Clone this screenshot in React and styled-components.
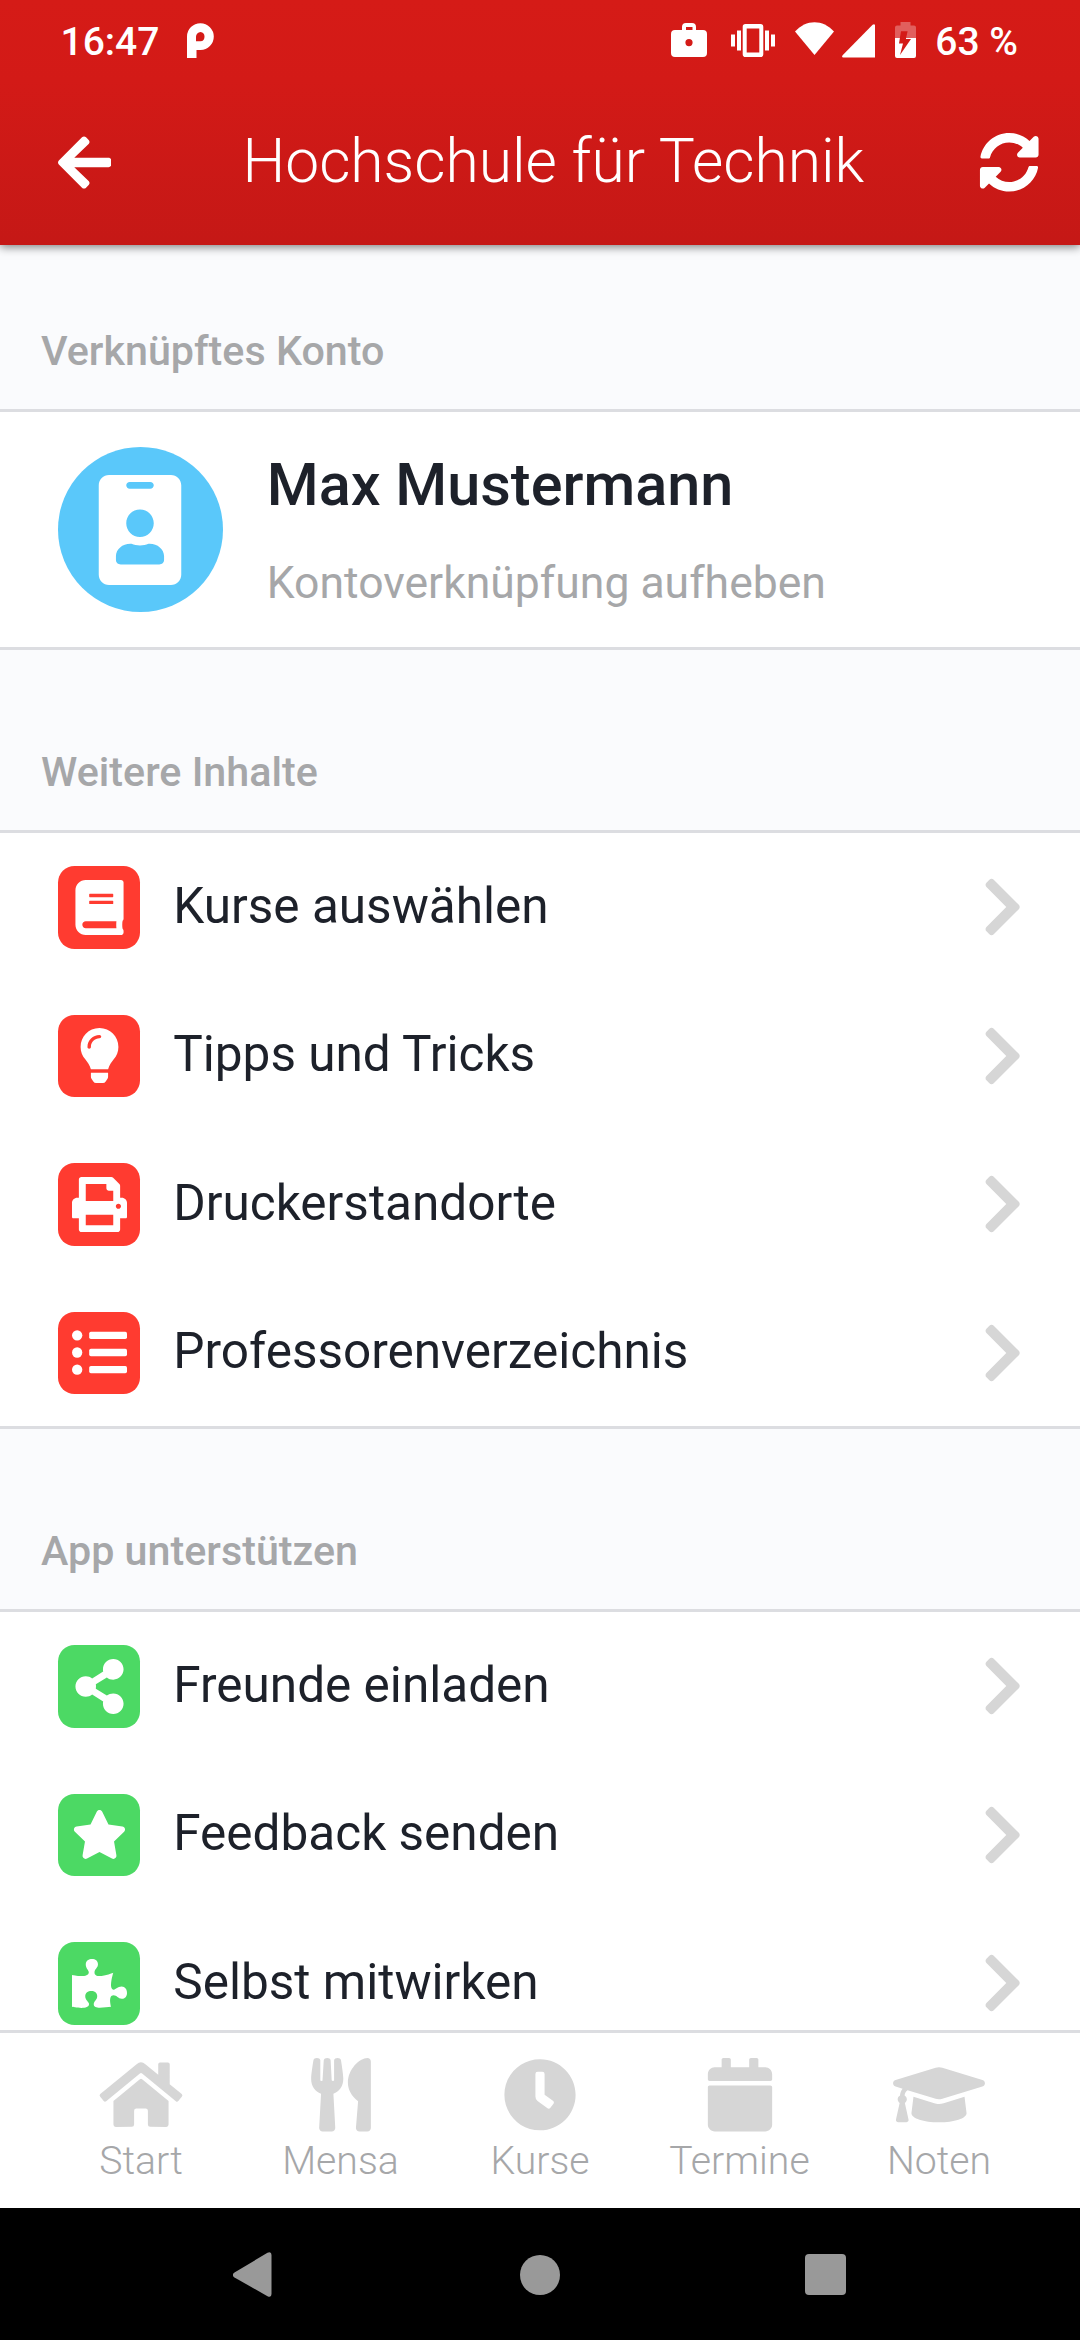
import React from 'react';
import styled, { createGlobalStyle, css } from 'styled-components';
import {
  FaArrowLeft,
  FaSyncAlt,
  FaIdBadge,
  FaBook,
  FaLightbulb,
  FaShareAlt,
  FaStar,
  FaPuzzlePiece,
  FaChevronRight,
  FaHome,
  FaUtensils,
  FaClock,
  FaCalendar,
  FaGraduationCap,
} from 'react-icons/fa';

const colors = {
  line: '#dcdde1',
  page: '#fafbfd',
  ink: '#1d212a',
  muted: '#a6a7a9',
  faint: '#d6d6d6',
  red: '#ff3b30',
  green: '#4cd964',
  blue: '#5ac8fa',
};

const GlobalStyle = createGlobalStyle`
  *, *::before, *::after { box-sizing: border-box; }
  body {
    margin: 0;
    font-family: Roboto, "Liberation Sans", sans-serif;
    background: ${colors.page};
  }
  svg { display: block; flex: none; }
`;

const Screen = styled.div`
  width: 1080px;
  height: 2340px;
  display: flex;
  flex-direction: column;
  overflow: hidden;
  background: ${colors.page};
`;

const Header = styled.header`
  flex: none;
  height: 245px;
  display: flex;
  flex-direction: column;
  color: #fff;
  background: linear-gradient(#d51b17 0, #d31a17 80px, #c51816 245px);
  box-shadow: 0 2px 9px rgba(0, 0, 0, 0.5);
  z-index: 1;
`;

const StatusBar = styled.div`
  height: 82px;
  padding: 0 62px 0 60.5px;
  display: flex;
  align-items: center;
  justify-content: space-between;
`;

const StatusGroup = styled.div`
  display: flex;
  align-items: center;
`;

const StatusText = styled.span`
  padding-top: 2px;
  font-size: 39px;
  line-height: 46px;
  font-weight: 500;
  white-space: pre;
`;

const TitleBar = styled.div`
  flex: 1;
  padding: 0 40px 3px 57.75px;
  display: flex;
  align-items: center;
  justify-content: space-between;
`;

const BackArrow = styled(FaArrowLeft)`
  width: 53.4px;
  height: 61px;
`;

const Title = styled.h1`
  margin: 0 0 0 16px;
  font-size: 60.5px;
  line-height: 72px;
  font-weight: 300;
`;

const Content = styled.main`
  flex: 1;
  min-height: 0;
  overflow: hidden;
`;

const SectionTitle = styled.h2`
  margin: 0;
  height: ${(p) => p.$height}px;
  padding: 0 41px 34px;
  display: flex;
  align-items: flex-end;
  font-size: 41.25px;
  line-height: 48px;
  font-weight: 500;
  color: ${colors.muted};
`;

const Group = styled.section`
  height: ${(p) => (p.$height ? `${p.$height}px` : 'auto')};
  background: #fff;
  border-top: 3px solid ${colors.line};
  border-bottom: 3px solid ${colors.line};
`;

const Account = styled.div`
  height: 235px;
  padding-left: 57.75px;
  display: flex;
  align-items: center;
  gap: 44px;
`;

const Avatar = styled.div`
  width: 165px;
  height: 165px;
  border-radius: 50%;
  background: ${colors.blue};
  color: #fff;
  display: flex;
  align-items: center;
  justify-content: center;
`;

const AccountText = styled.div`
  display: flex;
  flex-direction: column;
  gap: 37px;
`;

const AccountName = styled.div`
  font-size: 59.4px;
  line-height: 70px;
  font-weight: 500;
  color: ${colors.ink};
`;

const AccountAction = styled.div`
  font-size: 44.5px;
  line-height: 52px;
  color: ${colors.muted};
`;

const Row = styled.div`
  height: 148.5px;
  padding: 0 56.5px 0 57.75px;
  display: flex;
  align-items: center;
`;

const Tile = styled.div`
  width: 82.5px;
  height: 82.5px;
  border-radius: 16.5px;
  background: ${(p) => p.$color};
  color: #fff;
  display: flex;
  align-items: center;
  justify-content: center;
`;

const RowLabel = styled.div`
  flex: 1;
  padding: 0 0 3px 33px;
  font-size: 49.5px;
  line-height: 60px;
  color: ${colors.ink};
`;

const Chevron = styled(FaChevronRight)`
  width: 41.25px;
  height: 66px;
  color: ${colors.faint};
`;

const TabBar = styled.nav`
  flex: none;
  height: 178px;
  padding: 25px 41.25px 0;
  border-top: 3px solid ${colors.line};
  background: #fff;
  display: grid;
  grid-template-columns: repeat(5, 1fr);
`;

const Tab = styled.div`
  display: flex;
  flex-direction: column;
  align-items: center;
  gap: 6px;
  font-size: 39.2px;
  line-height: 46px;
  font-weight: 300;
  color: ${colors.muted};

  svg {
    width: 92px;
    height: 73.5px;
    color: ${colors.faint};
  }
`;

const SystemBar = styled.footer`
  flex: none;
  height: 132px;
  padding: 1px 234.5px 0 233px;
  background: #000;
  display: flex;
  align-items: center;
  justify-content: space-between;
`;

const iconSize = css`
  width: ${(p) => p.$w}px;
  height: ${(p) => p.$h}px;
  margin-left: ${(p) => p.$gap || 0}px;
  margin-bottom: ${(p) => p.$lift || 0}px;
`;

const Glyph = styled.svg`
  ${iconSize}
  fill: currentColor;
`;

const PocketIcon = () => (
  <Glyph $w={27} $h={36} $gap={28} viewBox="0 0 27 36">
    <path fillRule="evenodd" d="M0 35V13.500A13.400 13.400 0 1 1 13.500 27H9.500V35ZM13.500 9A4.700 4.700 0 0 0 9 13.700V18.300H13.500A4.700 4.700 0 0 0 13.500 9Z" />
  </Glyph>
);

const WorkIcon = () => (
  <Glyph $w={36} $h={36} viewBox="0 0 36 36">
    <path fillRule="evenodd" d="M4 7H11V4A4 4 0 0 1 15 0H21A4 4 0 0 1 25 4V7H32A4 4 0 0 1 36 11V30A4 4 0 0 1 32 34H4A4 4 0 0 1 0 30V11A4 4 0 0 1 4 7ZM15 4V7H21.500V4ZM18 16A3.600 3.600 0 1 0 18 23.200A3.600 3.600 0 0 0 18 16Z" />
  </Glyph>
);

const VibrateIcon = () => (
  <Glyph $w={44} $h={34} $gap={24} $lift={1} viewBox="0 0 44 34">
    <path fillRule="evenodd" d="M14.500 0H29.500A2.800 2.800 0 0 1 32.300 2.800V30.200A2.800 2.800 0 0 1 29.500 33H14.500A2.800 2.800 0 0 1 11.700 30.200V2.800A2.800 2.800 0 0 1 14.500 0ZM15.700 4.500V28.500H28.300V4.500Z" />
    <path d="M0 10.500H4V22.500H0ZM6 6.500H10V26.500H6ZM34 6.500H38V26.500H34ZM40 10.500H44V22.500H40Z" />
  </Glyph>
);

const WifiIcon = () => (
  <Glyph $w={39} $h={34} $gap={20} $lift={4} viewBox="0 0 39 34">
    <path d="M0 9.500C11-3 28-3 39 9.500L19.500 33Z" />
  </Glyph>
);

const SignalIcon = () => (
  <Glyph $w={33} $h={34} $gap={8} $lift={1} viewBox="0 0 33 34">
    <path d="M1.300 33.500Q-.8 33.200.6 31.200L30.600.8Q32.300-.6 33 1V33.500Z" />
  </Glyph>
);

const BatteryIcon = () => (
  <Glyph $w={21} $h={36} $gap={20} $lift={2} viewBox="0 0 21 36">
    <path opacity="0.3" d="M5.500 0H15.500V3.500H19A2 2 0 0 1 21 5.500V16H11.100L12.600 9.300H6L4.900 16H0V5.500A2 2 0 0 1 2 3.500H5.500Z" />
    <path d="M0 16H4.900L4 21.500H8L5 33L16 17H11V16H21V34A2 2 0 0 1 19 36H2A2 2 0 0 1 0 34Z" />
  </Glyph>
);

const PrinterIcon = () => (
  <Glyph $w={55} $h={55} viewBox="0 0 512 512">
    <path d="M464 192h-16V81.941a24 24 0 0 0-7.029-16.970L383.029 7.029A24 24 0 0 0 366.059 0H88C74.745 0 64 10.745 64 24v168H48c-26.510 0-48 21.490-48 48v132c0 6.627 5.373 12 12 12h52v104c0 13.255 10.745 24 24 24h336c13.255 0 24-10.745 24-24V384h52c6.627 0 12-5.373 12-12V240c0-26.510-21.490-48-48-48zm-80 256H128v-96h256v96zM128 224V64h192v40c0 13.200 10.800 24 24 24h40v96H128zm304 72c-13.254 0-24-10.746-24-24s10.746-24 24-24 24 10.746 24 24-10.746 24-24 24z" />
  </Glyph>
);

const ListIcon = () => (
  <Glyph $w={55} $h={55} viewBox="0 0 512 512">
    {[96, 256, 416].map((y) => (
      <g key={y}>
        <circle cx="48" cy={y} r="48" />
        <rect x="160" y={y - 34} width="352" height="68" rx="16" />
      </g>
    ))}
  </Glyph>
);

const BackKey = () => (
  <Glyph $w={38.5} $h={45} viewBox="24.5 0 38.5 45">
    <path fill="#999" d="M26 20.500L59 .8Q63-.8 63 3V42Q63 46 59 44.200L26 25.500Q22.500 23 26 20.500Z" />
  </Glyph>
);

const HomeKey = styled.div`
  width: 40px;
  height: 40px;
  margin-left: 4px;
  border-radius: 50%;
  background: #999;
`;

const RecentsKey = styled.div`
  width: 41px;
  height: 41px;
  border-radius: 4px;
  background: #999;
`;

const contentRows = [
  { label: 'Kurse auswählen', icon: <FaBook size={55} /> },
  { label: 'Tipps und Tricks', icon: <FaLightbulb size={55} /> },
  { label: 'Druckerstandorte', icon: <PrinterIcon /> },
  { label: 'Professorenverzeichnis', icon: <ListIcon /> },
];

const supportRows = [
  { label: 'Freunde einladen', icon: <FaShareAlt size={55} /> },
  { label: 'Feedback senden', icon: <FaStar size={55} /> },
  { label: 'Selbst mitwirken', icon: <FaPuzzlePiece size={55} /> },
];

const tabs = [
  { label: 'Start', icon: <FaHome /> },
  { label: 'Mensa', icon: <FaUtensils /> },
  { label: 'Kurse', icon: <FaClock /> },
  { label: 'Termine', icon: <FaCalendar /> },
  { label: 'Noten', icon: <FaGraduationCap /> },
];

const Rows = ({ items, color, height }) => (
  <Group $height={height}>
    {items.map((item) => (
      <Row key={item.label}>
        <Tile $color={color}>{item.icon}</Tile>
        <RowLabel>{item.label}</RowLabel>
        <Chevron />
      </Row>
    ))}
  </Group>
);

export default function App() {
  return (
    <Screen>
      <GlobalStyle />
      <Header>
        <StatusBar>
          <StatusGroup>
            <StatusText>16:47</StatusText>
            <PocketIcon />
          </StatusGroup>
          <StatusGroup>
            <WorkIcon />
            <VibrateIcon />
            <WifiIcon />
            <SignalIcon />
            <BatteryIcon />
            <StatusText>{'  63 %'}</StatusText>
          </StatusGroup>
        </StatusBar>
        <TitleBar>
          <BackArrow />
          <Title>Hochschule für Technik</Title>
          <FaSyncAlt size={60.5} />
        </TitleBar>
      </Header>
      <Content>
        <SectionTitle $height={164}>Verknüpftes Konto</SectionTitle>
        <Group>
          <Account>
            <Avatar>
              <FaIdBadge size={110} />
            </Avatar>
            <AccountText>
              <AccountName>Max Mustermann</AccountName>
              <AccountAction>Kontoverknüpfung aufheben</AccountAction>
            </AccountText>
          </Account>
        </Group>
        <SectionTitle $height={180}>Weitere Inhalte</SectionTitle>
        <Rows items={contentRows} color={colors.red} height={599} />
        <SectionTitle $height={180}>App unterstützen</SectionTitle>
        <Rows items={supportRows} color={colors.green} />
      </Content>
      <TabBar>
        {tabs.map((tab) => (
          <Tab key={tab.label}>
            {tab.icon}
            {tab.label}
          </Tab>
        ))}
      </TabBar>
      <SystemBar>
        <BackKey />
        <HomeKey />
        <RecentsKey />
      </SystemBar>
    </Screen>
  );
}
